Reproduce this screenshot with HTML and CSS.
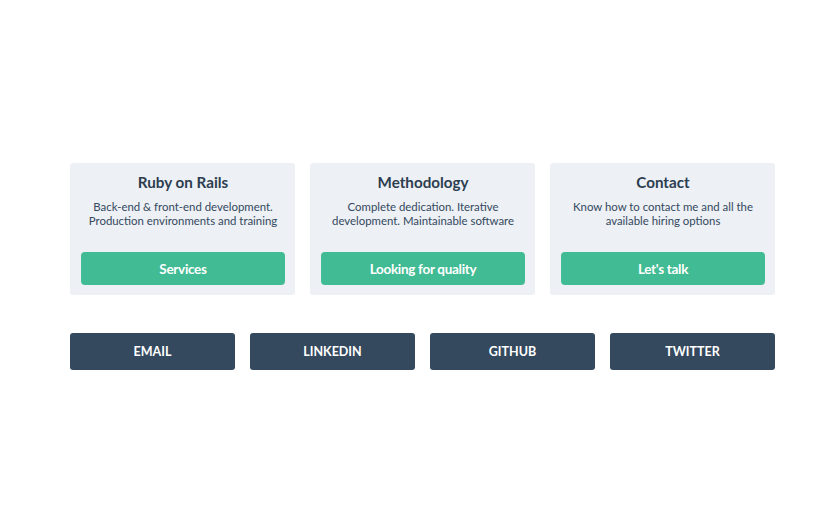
FILE: index.html
```html
<!DOCTYPE html>
<html>
<head>
<meta charset="utf-8">
<link rel="stylesheet" href="styles.css">
</head>
<body>
<main class="page">
  <section class="cards">
    <div class="card">
      <h2 class="card-title">Ruby on Rails</h2>
      <p class="card-text">Back-end &amp; front-end development.<br>Production environments and training</p>
      <a class="card-btn" href="#">Services</a>
    </div>
    <div class="card">
      <h2 class="card-title">Methodology</h2>
      <p class="card-text">Complete dedication. Iterative<br>development. Maintainable software</p>
      <a class="card-btn" href="#">Looking for quality</a>
    </div>
    <div class="card">
      <h2 class="card-title">Contact</h2>
      <p class="card-text">Know how to contact me and all the<br>available hiring options</p>
      <a class="card-btn" href="#">Let's talk</a>
    </div>
  </section>
  <nav class="social">
    <a class="social-btn" href="#">EMAIL</a>
    <a class="social-btn" href="#">LINKEDIN</a>
    <a class="social-btn" href="#">GITHUB</a>
    <a class="social-btn" href="#">TWITTER</a>
  </nav>
</main>
</body>
</html>
```
FILE: styles.css
```css
html, body {
  margin: 0;
  padding: 0;
  background: #ffffff;
}
body {
  font-family: Lato, "Liberation Sans", sans-serif;
  color: #2c3e50;
}
.page {
  width: 705px;
  padding: 163px 0 0 70px;
}
.cards {
  display: grid;
  grid-template-columns: repeat(3, 1fr);
  gap: 15px;
}
.card {
  background: #edf0f5;
  border-radius: 3px;
  padding: 9px 10px 10px 11px;
  display: flex;
  flex-direction: column;
  align-items: stretch;
  text-align: center;
}
.card-title {
  margin: 0;
  font-size: 15.2px;
  line-height: 20px;
  font-weight: 700;
  color: #2c3e50;
}
.card-text {
  margin: 8px 0 0;
  font-size: 11.4px;
  line-height: 14px;
  color: #34495e;
}
.card-btn {
  margin-top: 24px;
  height: 33px;
  line-height: 34px;
  background: #40bb93;
  color: #ffffff;
  border-radius: 4px;
  font-size: 13.5px;
  letter-spacing: -0.3px;
  font-weight: 700;
  text-decoration: none;
}
.social {
  margin-top: 38px;
  display: grid;
  grid-template-columns: repeat(4, 1fr);
  gap: 15px;
}
.social-btn {
  height: 37px;
  line-height: 37px;
  background: #34495e;
  color: #ffffff;
  border-radius: 3px;
  text-align: center;
  font-size: 12.5px;
  font-weight: 700;
  text-decoration: none;
}
```
